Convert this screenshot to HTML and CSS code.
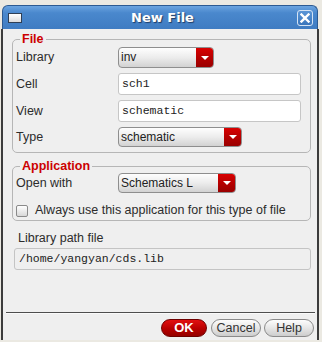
FILE: index.html
```html
<!DOCTYPE html>
<html lang="en">
<head>
  <meta charset="UTF-8">
  <title>New File</title>
  <link rel="stylesheet" href="styles.css">
</head>
<body>
  <div class="window">
    <!-- 标题栏 -->
    <div class="titlebar">
      <span class="win-icon"></span>
      <span class="title">New File</span>
      <span class="close">
        <svg width="10" height="10" viewBox="0 0 10 10"><path d="M1.5 1.5 L8.5 8.5 M8.5 1.5 L1.5 8.5" stroke="#fff" stroke-width="2.4" stroke-linecap="square"/></svg>
      </span>
    </div>
    <div class="body">
      <fieldset class="group file-group">
        <legend>File</legend>
        <div class="form-grid">
          <label>Library</label>
          <div class="combo combo-lib"><span class="combo-text">inv</span><span class="combo-arrow"></span></div>
          <label>Cell</label>
          <div class="field">sch1</div>
          <label>View</label>
          <div class="field">schematic</div>
          <label>Type</label>
          <div class="combo combo-type"><span class="combo-text">schematic</span><span class="combo-arrow"></span></div>
        </div>
      </fieldset>
      <fieldset class="group app-group">
        <legend>Application</legend>
        <div class="form-grid">
          <label>Open with</label>
          <div class="combo combo-app"><span class="combo-text">Schematics L</span><span class="combo-arrow"></span></div>
        </div>
        <div class="check-row">
          <span class="checkbox"></span>
          <span>Always use this application for this type of file</span>
        </div>
      </fieldset>
      <div class="path-label">Library path file</div>
      <div class="path-field">/home/yangyan/cds.lib</div>
      <div class="spacer"></div>
      <div class="separator"></div>
      <div class="buttons">
        <span class="btn btn-ok">OK</span>
        <span class="btn">Cancel</span>
        <span class="btn">Help</span>
      </div>
    </div>
  </div>
</body>
</html>
```
FILE: styles.css
```css
body {
  margin: 0;
  background: #ebe9e2;
  font-family: "Liberation Sans", Arial, sans-serif;
  font-size: 12.5px;
  color: #2c2c2c;
}
.window {
  margin: 5px 0 0 1px;
  width: 318px;
  height: 335px;
  display: flex;
  flex-direction: column;
}
.titlebar {
  height: 24px;
  box-sizing: border-box;
  margin: 0 1px;
  border: 1px solid #2c5a92;
  border-bottom: none;
  border-radius: 6px 6px 0 0;
  background: linear-gradient(#6ba4e0, #4a88cd 30%, #3f7cc2);
  display: flex;
  align-items: center;
  padding: 0 4px 0 5px;
}
.win-icon {
  width: 12px;
  height: 8px;
  border: 1px solid #2f3f55;
  background: linear-gradient(#ffffff, #dcdcdc);
}
.title {
  flex: 1;
  text-align: center;
  font-family: "DejaVu Sans", sans-serif;
  font-weight: bold;
  font-size: 13px;
  color: #fff;
  text-shadow: 1px 1px 1px #1d3b66;
  padding-left: 6px;
}
.close {
  width: 14px;
  height: 14px;
  border: 1px solid #d4e3f4;
  border-radius: 3px;
  background: linear-gradient(#5a95d6, #3a76bc);
  display: flex;
  align-items: center;
  justify-content: center;
}
.body {
  flex: 1;
  background: #efefef;
  border-left: 2px solid #3c3c3c;
  border-right: 2px solid #3c3c3c;
  display: flex;
  flex-direction: column;
}
.group {
  margin: 0 6px 0 9px;
  padding: 0 9px 5px 3px;
  border: 1px solid #b6b6b6;
  border-radius: 5px;
  min-width: 0;
}
.group legend {
  margin-left: 4px;
  padding: 0 2px;
  font-weight: bold;
  font-size: 12.5px;
  line-height: 14px;
  color: #cc0000;
}
.file-group {
  margin-top: 3px;
  padding-top: 1px;
}
.app-group {
  margin-top: 6px;
  padding-bottom: 2px;
}
.form-grid {
  display: grid;
  grid-template-columns: 102px 1fr;
  row-gap: 5px;
  align-items: center;
}
.form-grid label {
  line-height: 15px;
}
.combo {
  height: 21px;
  box-sizing: border-box;
  border: 1px solid #8e8e8e;
  border-radius: 4px;
  background: linear-gradient(#fefefe, #ececec 50%, #d2d2d2);
  display: flex;
  overflow: hidden;
  font-size: 12px;
}
.combo-lib { width: 96px; }
.combo-type { width: 124px; height: 20px; }
.combo-app { width: 118px; height: 20px; }
.combo-text {
  flex: 1;
  padding-left: 2px;
  line-height: 19px;
  color: #222;
}
.combo-arrow {
  width: 17px;
  background: linear-gradient(#d80000, #b00000 60%, #9a0000);
  display: flex;
  align-items: center;
  justify-content: center;
}
.combo-arrow::after {
  content: "";
  border-left: 4px solid transparent;
  border-right: 4px solid transparent;
  border-top: 4px solid #fff;
}
.field {
  height: 22px;
  box-sizing: border-box;
  background: #fff;
  border: 1px solid #c6c6c6;
  border-radius: 3px;
  padding-left: 3px;
  font-family: "Liberation Mono", "Courier New", monospace;
  font-size: 11.5px;
  line-height: 20px;
  color: #222;
}
.check-row {
  margin-top: 10px;
  display: flex;
  align-items: center;
  gap: 7px;
  line-height: 15px;
}
.checkbox {
  width: 10px;
  height: 10px;
  border: 1px solid #8a8a8a;
  border-radius: 2px;
  background: linear-gradient(#ffffff, #d8d8d8);
}
.path-label {
  margin: 9px 0 0 15px;
  line-height: 16px;
}
.path-field {
  margin: 2px 6px 0 11px;
  height: 22px;
  box-sizing: border-box;
  border: 1px solid #c4c4c4;
  border-radius: 3px;
  padding-left: 4px;
  font-family: "Liberation Mono", "Courier New", monospace;
  font-size: 11.5px;
  line-height: 20px;
  color: #222;
}
.spacer {
  flex: 1;
}
.separator {
  margin: 0 2px 5px 3px;
  border-top: 1px solid #4e4e4e;
  border-bottom: 1px solid #fafafa;
}
.buttons {
  display: flex;
  justify-content: flex-end;
  gap: 3px;
  margin: 0 3px 3px 0;
}
.btn {
  width: 50px;
  height: 18px;
  box-sizing: border-box;
  border: 1px solid #8a8a8a;
  border-radius: 9px;
  background: linear-gradient(#fdfdfd, #e6e6e6 50%, #cdcdcd);
  text-align: center;
  line-height: 16px;
  color: #333;
}
.btn-ok {
  width: 46px;
  margin-right: 1px;
  border-color: #6e0000;
  background: linear-gradient(#e21010, #b80000 55%, #940000);
  color: #fff;
  font-weight: bold;
  font-size: 13px;
}
```
